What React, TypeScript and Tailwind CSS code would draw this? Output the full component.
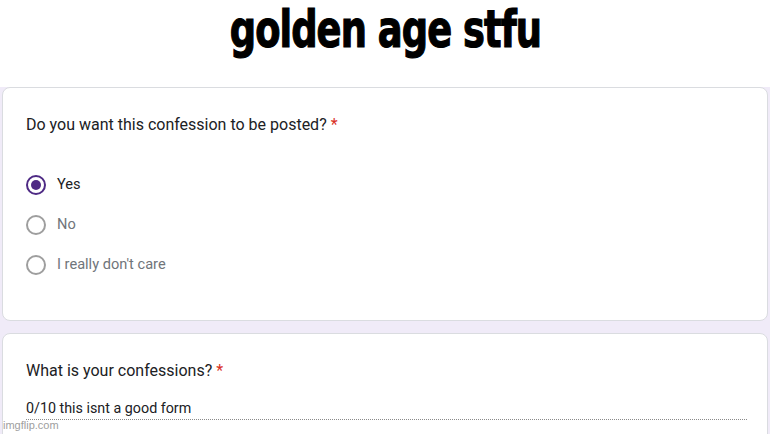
import React from "react";

const options = [
  { label: "Yes", checked: true },
  { label: "No", checked: false },
  { label: "I really don't care", checked: false },
];

function Radio({ checked }: { checked: boolean }) {
  if (checked) {
    return (
      <span className="flex h-5 w-5 items-center justify-center rounded-full border-2 border-[#4e2a84]">
        <span className="h-[10px] w-[10px] rounded-full bg-[#4e2a84]" />
      </span>
    );
  }
  return <span className="h-5 w-5 rounded-full border-2 border-[#9e9e9e]" />;
}

function Asterisk() {
  return <span className="ml-1 text-[#d93025]">*</span>;
}

export default function App() {
  return (
    <div className="relative h-[434px] w-[770px] overflow-hidden bg-white font-['Roboto',sans-serif]">
      <header className="flex h-[87px] items-start justify-center">
        <h1 className="mt-[1px] origin-top scale-x-[0.93] scale-y-[1.18] font-['DejaVu_Sans_Condensed',sans-serif] text-[44px] font-bold leading-[48px] tracking-[-1px] text-black [-webkit-text-stroke:1px_black]">
          golden age stfu
        </h1>
      </header>

      <div className="flex flex-col gap-[12px] bg-[#f0ebf8] px-[2px]">
        <section className="h-[234px] rounded-lg border border-[#dadce0] bg-white px-[23px] pt-[25px]">
          <p className="text-[16px] leading-[24px] text-[#202124]">
            Do you want this confession to be posted?
            <Asterisk />
          </p>
          <div className="mt-[28px] flex flex-col">
            {options.map((o) => (
              <label key={o.label} className="flex h-[40px] items-center gap-[11px]">
                <Radio checked={o.checked} />
                <span
                  className={
                    o.checked
                      ? "text-[14.6px] text-[#202124]"
                      : "text-[14.6px] text-[#70757a]"
                  }
                >
                  {o.label}
                </span>
              </label>
            ))}
          </div>
        </section>

        <section className="h-[140px] rounded-lg border border-[#dadce0] bg-white px-[23px] pt-[25px]">
          <p className="text-[16px] leading-[24px] text-[#202124]">
            What is your confessions?
            <Asterisk />
          </p>
          <div className="mt-[15px] w-[721px] border-b border-dotted border-[#8a8a8a] pb-[1px] text-[14.3px] leading-[20px] text-[#202124]">
            0/10 this isnt a good form
          </div>
        </section>
      </div>

      <span className="absolute bottom-[3px] left-[3px] font-['Liberation_Sans',sans-serif] text-[11px] leading-[12px] text-[#9e9e9e]">
        imgflip.com
      </span>
    </div>
  );
}
